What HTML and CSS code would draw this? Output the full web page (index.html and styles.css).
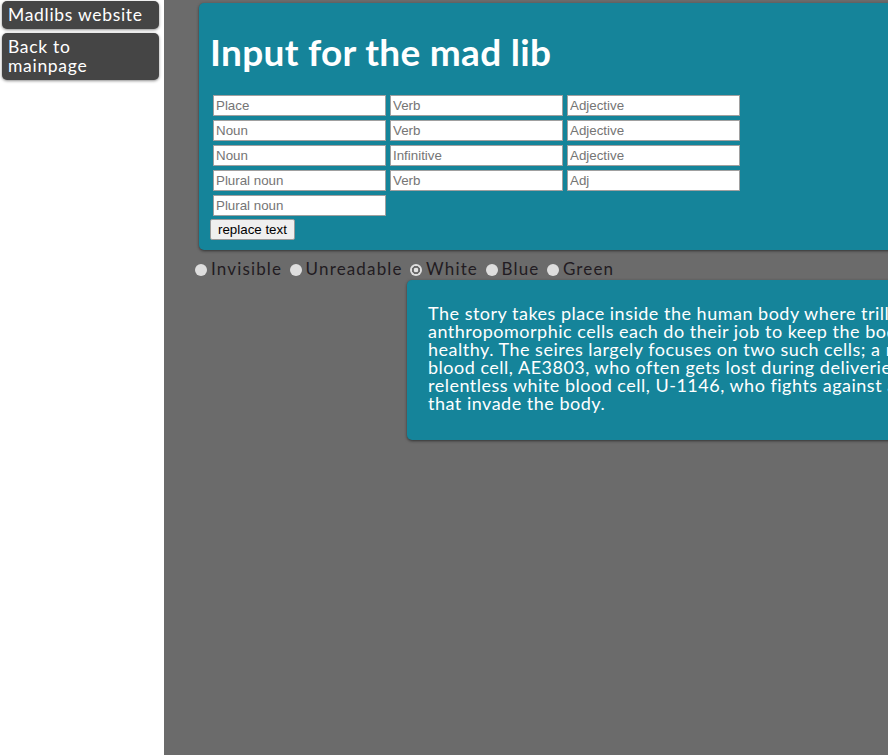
FILE: index.html
```html
<!DOCTYPE html>
<html>
<head>
<meta charset="utf-8">
<link rel="stylesheet" href="styles.css">
</head>
<body>
<nav class="sidebar">
  <a class="navbtn" href="#">Madlibs website</a>
  <a class="navbtn" href="#">Back to<br>mainpage</a>
</nav>
<main class="main">
  <section class="card input-card">
    <h1 class="title">Input for the mad lib</h1>
    <div class="grid">
      <input placeholder="Place"><input placeholder="Verb"><input placeholder="Adjective">
      <input placeholder="Noun"><input placeholder="Verb"><input placeholder="Adjective">
      <input placeholder="Noun"><input placeholder="Infinitive"><input placeholder="Adjective">
      <input placeholder="Plural noun"><input placeholder="Verb"><input placeholder="Adj">
      <input placeholder="Plural noun">
    </div>
    <button class="replace">replace text</button>
  </section>
  <div class="radios">
    <label><input type="radio" name="c">Invisible</label>
    <label><input type="radio" name="c">Unreadable</label>
    <label><input type="radio" name="c" checked>White</label>
    <label><input type="radio" name="c">Blue</label>
    <label><input type="radio" name="c">Green</label>
  </div>
  <section class="card story-card">
    <p class="story">The story takes place inside the human body where trillions of<br>anthropomorphic cells each do their job to keep the body<br>healthy. The seires largely focuses on two such cells; a red<br>blood cell, AE3803, who often gets lost during deliveries, and a<br>relentless white blood cell, U-1146, who fights against antigens<br>that invade the body.</p>
  </section>
</main>
</body>
</html>
```
FILE: styles.css
```css
html, body {
  margin: 0;
  height: 100%;
  overflow: hidden;
}
body {
  display: flex;
  font-family: "Lato", "Noto Sans", sans-serif;
  background: #6b6b6b;
}
.sidebar {
  width: 164px;
  flex: none;
  background: #ffffff;
  padding: 1px 5px 0 2px;
  box-sizing: border-box;
  display: flex;
  flex-direction: column;
  gap: 4px;
}
.navbtn {
  display: block;
  background: #454545;
  color: #ffffff;
  text-decoration: none;
  font-size: 17.5px;
  letter-spacing: 0.7px;
  line-height: 19px;
  padding: 4px 6px 5px 6px;
  border-radius: 5px;
  box-shadow: 0 1px 3px rgba(0,0,0,0.45);
}
.main {
  flex: 1;
  min-width: 0;
  padding: 3px 0 0 35px;
}
.card {
  background: #15849a;
  border-radius: 5px;
  box-shadow: 0 1px 3px rgba(0,0,0,0.55);
  width: 900px;
}
.input-card {
  padding: 1px 0 10px 11px;
  box-sizing: border-box;
  height: 247px;
}
.title {
  color: #ffffff;
  font-size: 37px;
  font-weight: 700;
  margin: 28px 0 23px 0;
  line-height: 40px;
  letter-spacing: 0.3px;
}
.grid {
  display: grid;
  grid-template-columns: repeat(3, 173px);
  column-gap: 4px;
  row-gap: 4px;
  margin-left: 3px;
  width: 530px;
}
.grid input {
  font-family: "Liberation Sans", Arial, sans-serif;
  font-size: 13.33px;
  height: 21px;
  box-sizing: border-box;
  border: 1px solid #a0a0a0;
  padding: 1px 2px;
  margin: 0;
  background: #fff;
}
.grid input::placeholder {
  color: #757575;
}
.replace {
  font-family: "Liberation Sans", Arial, sans-serif;
  font-size: 13.33px;
  margin-top: 3px;
  height: 21px;
  padding: 1px 7px;
  background: #efefef;
  border: 1px solid #9a9a9a;
  border-radius: 2px;
  color: #000;
}
.radios {
  margin: 10px 0 0 -4px;
  font-size: 17px;
  letter-spacing: 1.15px;
  color: #221c22;
  height: 18px;
  line-height: 18px;
  white-space: nowrap;
}
.radios label {
  margin-right: 2px;
}
.radios input {
  appearance: none;
  -webkit-appearance: none;
  margin: 0 4px 0 0;
  width: 12px;
  height: 12px;
  border-radius: 50%;
  background: #dedede;
  vertical-align: -1px;
}
.radios input:checked {
  background: radial-gradient(circle, #e4e4e4 0 2px, #6a6a6a 2.6px 3.8px, #dedede 4.4px);
}
.story-card {
  margin: 2px 0 0 208px;
  height: 160px;
  box-sizing: border-box;
  padding: 24px 0 0 21px;
}
.story {
  margin: 0;
  color: #ffffff;
  font-size: 18px;
  letter-spacing: 0.5px;
  line-height: 18px;
  white-space: nowrap;
}
```
